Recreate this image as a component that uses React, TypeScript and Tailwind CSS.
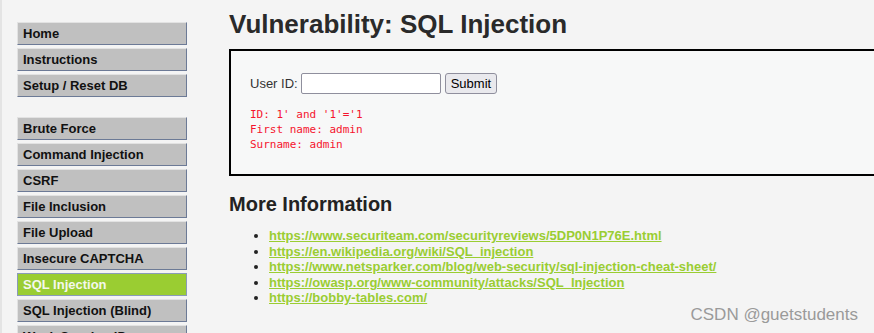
import React from "react";

const menuTop = ["Home", "Instructions", "Setup / Reset DB"];
const menuVulns = [
  "Brute Force",
  "Command Injection",
  "CSRF",
  "File Inclusion",
  "File Upload",
  "Insecure CAPTCHA",
  "SQL Injection",
  "SQL Injection (Blind)",
  "Weak Session IDs",
];

const links = [
  "https://www.securiteam.com/securityreviews/5DP0N1P76E.html",
  "https://en.wikipedia.org/wiki/SQL_injection",
  "https://www.netsparker.com/blog/web-security/sql-injection-cheat-sheet/",
  "https://owasp.org/www-community/attacks/SQL_Injection",
  "https://bobby-tables.com/",
];

function MenuItem({ label, selected }: { label: string; selected?: boolean }) {
  return (
    <li
      className={
        selected
          ? "h-[23px] border border-[#8a9bb8] bg-[#9acd32] pl-[5px] text-[13px] font-bold leading-[21px] text-[#f4f8ec]"
          : "h-[23px] border-t border-l border-t-[#e2e2e2] border-l-[#e2e2e2] border-r border-b border-r-[#6c7a96] border-b-[#6c7a96] bg-[#c0c0c0] pl-[5px] text-[13px] font-bold leading-[21px] text-[#111]"
      }
    >
      {label}
    </li>
  );
}

export default function App() {
  return (
    <div
      className="relative flex h-[333px] w-[874px] overflow-hidden border-l-2 border-[#e4e4e4] bg-[#f4f4f4] text-[#333]"
      style={{ fontFamily: '"Liberation Sans", Arial, sans-serif' }}
    >
      <div className="w-[185px] shrink-0 pl-[15px] pt-[22px]">
        <ul className="flex flex-col gap-[3px]">
          {menuTop.map((m) => (
            <MenuItem key={m} label={m} />
          ))}
        </ul>
        <ul className="mt-[20px] flex flex-col gap-[3px]">
          {menuVulns.map((m) => (
            <MenuItem key={m} label={m} selected={m === "SQL Injection"} />
          ))}
        </ul>
      </div>

      <div className="ml-[42px] w-[700px] shrink-0">
        <h1 className="mt-[9px] text-[26px] font-bold leading-[30px] text-[#2a2a2a]">
          Vulnerability: SQL Injection
        </h1>

        <div className="mt-[10px] h-[127px] border-2 border-black bg-[#f7f8f8] pl-[19px] pt-[22px]">
          <form className="flex items-center text-[13px] text-[#333]">
            <span>User ID:</span>
            <input
              type="text"
              className="ml-[3px] h-[21px] w-[140px] rounded-[2px] border border-[#8f8f9d] bg-white"
            />
            <button
              type="button"
              className="ml-[4px] h-[21px] rounded-[3px] border border-[#8f8f9d] bg-[#e9e9ed] px-[5px] text-[13px] leading-[19px] text-black"
            >
              Submit
            </button>
          </form>
          <pre
            className="mt-[13px] text-[11px] leading-[15px] text-[#f5142e]"
            style={{ fontFamily: '"DejaVu Sans Mono", monospace' }}
          >
            {"ID: 1' and '1'='1\nFirst name: admin\nSurname: admin"}
          </pre>
        </div>

        <h2 className="mt-[16px] text-[20px] font-bold leading-[24px] text-[#222]">
          More Information
        </h2>
        <ul className="ml-[40px] mt-[12px] list-disc text-[13px] leading-[15.6px] text-[#222]">
          {links.map((l) => (
            <li key={l}>
              <a href="#" className="font-bold text-[#9acd32] underline">
                {l}
              </a>
            </li>
          ))}
        </ul>
      </div>

      <div className="absolute right-[16px] top-[302px] text-[17px] text-[#9a9a9a]">
        CSDN @guetstudents
      </div>
    </div>
  );
}
